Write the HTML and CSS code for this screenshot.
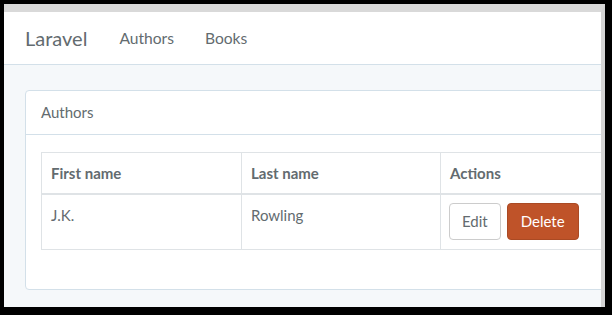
FILE: index.html
```html
<!DOCTYPE html>
<html lang="en">
<head>
    <meta charset="UTF-8">
    <meta name="viewport" content="width=device-width, initial-scale=1.0">
    <title>Laravel</title>
    <link rel="stylesheet" href="styles.css">
</head>
<body>
    <div class="frame">
        <div class="window">
            <div class="app">
                <!-- Navbar -->
                <nav class="navbar">
                    <a class="brand" href="#">Laravel</a>
                    <a class="nav-link" href="#">Authors</a>
                    <a class="nav-link" href="#">Books</a>
                </nav>

                <!-- Authors panel -->
                <div class="container">
                    <div class="panel">
                        <div class="panel-heading">Authors</div>
                        <div class="panel-body">
                            <table class="table">
                                <thead>
                                    <tr>
                                        <th class="col-first">First name</th>
                                        <th class="col-last">Last name</th>
                                        <th>Actions</th>
                                    </tr>
                                </thead>
                                <tbody>
                                    <tr>
                                        <td>J.K.</td>
                                        <td>Rowling</td>
                                        <td>
                                            <div class="actions">
                                                <a class="btn btn-default" href="#">Edit</a>
                                                <button class="btn btn-danger">Delete</button>
                                            </div>
                                        </td>
                                    </tr>
                                </tbody>
                            </table>
                        </div>
                    </div>
                </div>
            </div>
        </div>
    </div>
</body>
</html>
```

FILE: styles.css
```css
/* Screenshot frame */
body { margin: 0; background-color: #000; font-family: Lato, "Open Sans", sans-serif; color: #636b6f; }
.frame { padding: 4px 7px 8px 4px; height: 315px; box-sizing: border-box; }
.window { height: 100%; border-top: 8px solid #d9d9d9; border-right: 4px solid #d4d4d4; box-sizing: border-box; background-color: #f5f8fa; }
.app { height: 100%; overflow: hidden; }

/* Navbar */
.navbar { display: flex; align-items: center; height: 52px; background-color: #fff; border-bottom: 1px solid #d3e0e9; padding-left: 21px; }
.brand { font-size: 20px; color: #636b6f; text-decoration: none; margin-right: 32px; }
.nav-link { font-size: 15.6px; color: #636b6f; text-decoration: none; margin-right: 31px; }

/* Panel */
.container { padding: 25px 0 0 21px; }
.panel { width: 640px; background-color: #fff; border: 1px solid #d3e0e9; border-radius: 4px; }
.panel-heading { height: 43px; line-height: 43px; padding: 0 15px; border-bottom: 1px solid #d3e0e9; font-size: 15px; color: #636b6f; }
.panel-body { padding: 17px 15px 39px; }

/* Table */
.table { width: 600px; border-collapse: collapse; font-size: 15px; }
.table th, .table td { border: 1px solid #dfe3e6; text-align: left; vertical-align: top; padding: 8px 9px; line-height: 24px; }
.table th { font-weight: bold; border-bottom-width: 2px; height: 24px; vertical-align: middle; }
.col-first { width: 181px; }
.col-last { width: 180px; }

/* Buttons */
.actions { display: flex; gap: 6px; margin-left: -1px; padding-bottom: 1px; }
.btn { display: inline-block; box-sizing: border-box; height: 37px; line-height: 35px; padding: 0 12px; font-family: inherit; font-size: 15px; border-radius: 4px; text-decoration: none; cursor: pointer; }
.btn-default { color: #636b6f; background-color: #fff; border: 1px solid #ccc; }
.btn-danger { color: #fff; background-color: #bf5329; border: 1px solid #aa4a24; padding: 0 13px; }
```
